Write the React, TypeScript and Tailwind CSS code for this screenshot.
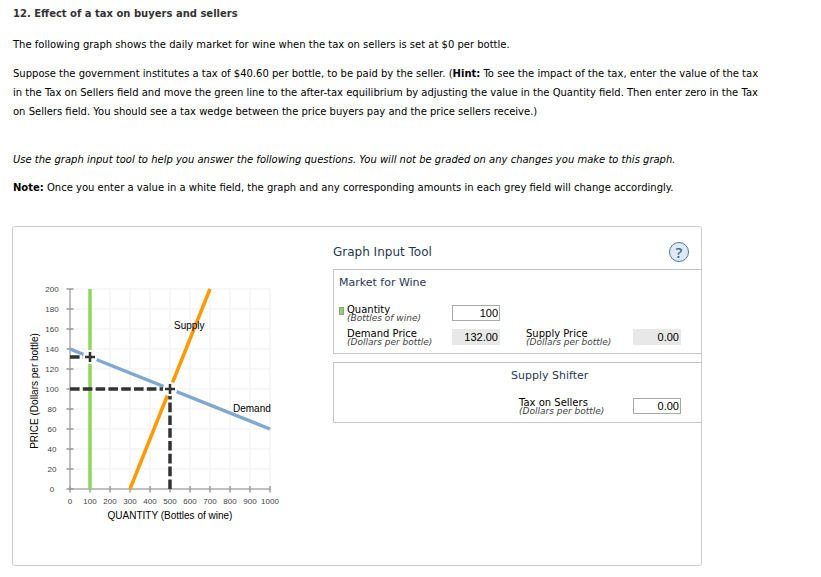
import React, { useState } from 'react';

interface FieldProps {
  id: string;
  label: string;
  unit: string;
  value: string;
  swatch?: boolean;
  onChange?: (text: string) => void;
}

interface PointProps {
  x: number;
  y: number;
}

const ORIGIN_X = 57;
const ORIGIN_Y = 262;

const px = (quantity: number) => ORIGIN_X + quantity / 5;
const py = (price: number) => ORIGIN_Y - price;

const steps = [0, 1, 2, 3, 4, 5, 6, 7, 8, 9, 10];

// white halo with a dark plus on top
const Point: React.FC<PointProps> = ({ x, y }) => (
  <g>
    <circle cx={x} cy={y} r="7.2" fill="#fff" />
    <path d={`M${x - 5} ${y}H${x + 5}M${x} ${y - 5}V${y + 5}`} stroke="#333" strokeWidth="2.6" />
  </g>
);

const Chart: React.FC<{ quantity: number; price: number; tax: number }> = ({ quantity, price, tax }) => {
  return (
    <svg width="320" height="338" className="shrink-0 font-['Liberation_Sans',sans-serif]" role="img" aria-label="Market for wine">
      <g stroke="#f7f7f7" strokeWidth="2">
        {steps.map((s) => (
          <path key={s} d={`M${px(s * 100)} 62V262M57 ${py(s * 20)}H257`} />
        ))}
      </g>
      <path d="M57 62V262H257" fill="none" stroke="#c0c0c0" strokeWidth="2" />
      <g stroke="#999" strokeWidth="1.4">
        {steps.map((s) => (
          <path key={s} d={`M${px(s * 100)} 259V265.5M53.5 ${py(s * 20)}H60.5`} />
        ))}
      </g>
      <g fontSize="8" fill="#444" textAnchor="middle">
        {steps.map((s) => (
          <text key={s} x={px(s * 100)} y="277">{s * 100}</text>
        ))}
      </g>
      <g fontSize="8" fill="#444" textAnchor="middle">
        {steps.map((s) => (
          <text key={s} x="39" y={py(s * 20) + 3}>{s * 20}</text>
        ))}
      </g>
      <path d={`M${px(quantity)} 62V262`} stroke="#8cd85c" strokeWidth="3.5" />
      <path d={`M57 ${py(140)}L257 ${py(60)}`} stroke="#7fa9d1" strokeWidth="3.5" />
      <path d={`M117 ${py(tax)}L197 ${py(200 + tax)}`} stroke="#ff9900" strokeWidth="3.5" />
      <g stroke="#333" strokeWidth="3.5" strokeDasharray="9.6 3.2">
        <path d={`M57 ${py(100)}H157`} />
        <path d={`M157 262V${py(100)}`} />
        <path d={`M57 ${py(price)}H${px(quantity)}`} />
      </g>
      <Point x={px(quantity)} y={py(price)} />
      <Point x={157} y={py(100)} />
      <g fontSize="10" fill="#000">
        <text x="161" y="102">Supply</text>
        <text x="220" y="185">Demand</text>
        <text x="157" y="292" textAnchor="middle">QUANTITY (Bottles of wine)</text>
        <text transform="translate(25 164) rotate(-90)" textAnchor="middle">PRICE (Dollars per bottle)</text>
      </g>
    </svg>
  );
};

const Field: React.FC<FieldProps> = ({ id, label, unit, value, swatch, onChange }) => {
  return (
    <div className="flex h-4 items-center">
      <span className="w-2 shrink-0">
        {swatch && <span className="mb-1 block h-2 w-[5px] border border-[#999] bg-[#8cd85c]" />}
      </span>
      <label htmlFor={id} className="flex-1 pt-0.5 text-[10px] leading-[9px] whitespace-nowrap text-black">
        {label}
        <span className="block text-[9px] text-[#444] italic">{unit}</span>
      </label>
      <input
        id={id}
        type="text"
        value={value}
        readOnly={!onChange}
        onChange={(e) => onChange && onChange(e.target.value)}
        className={`h-4 w-12 px-px text-right font-['Liberation_Sans',sans-serif] text-[11px] leading-[14px] text-black ${onChange ? 'border border-[#aaa] bg-white' : 'border border-[#e8e8e8] bg-[#e8e8e8]'}`}
      />
    </div>
  );
};

function App() {
  const [quantity, setQuantity] = useState('100');
  const [tax, setTax] = useState('0.00');

  const q = Math.min(1000, Math.max(0, Number(quantity) || 0));
  const t = Number(tax) || 0;
  const demandPrice = 140 - q * 0.08;
  const supplyPrice = Math.max(0, q * 0.5 - 150 + t);

  return (
    <main className="min-h-screen bg-white px-3 pt-1 font-['DejaVu_Sans',sans-serif] text-[10px] leading-[19px] text-black">
      <div className="max-w-[750px] pl-px">
        <h1 className="font-bold text-[#333]">12. Effect of a tax on buyers and sellers</h1>
        <p className="mt-3">The following graph shows the daily market for wine when the tax on sellers is set at $0 per bottle.</p>
        <p className="mt-[10px]">
          Suppose the government institutes a tax of $40.60 per bottle, to be paid by the seller. (<b>Hint:</b> To see
          the impact of the tax, enter the value of the tax in the Tax on Sellers field and move the green line to the
          after-tax equilibrium by adjusting the value in the Quantity field. Then enter zero in the Tax on Sellers
          field. You should see a tax wedge between the price buyers pay and the price sellers receive.)
        </p>
        <p className="mt-[29px] italic">
          Use the graph input tool to help you answer the following questions. You will not be graded on any changes you
          make to this graph.
        </p>
        <p className="mt-[9px]">
          <b>Note:</b> Once you enter a value in a white field, the graph and any corresponding amounts in each grey
          field will change accordingly.
        </p>
      </div>

      <section className="mt-[29px] flex max-w-[690px] rounded-[3px] border border-[#ccc]">
        <Chart quantity={q} price={demandPrice} tax={t} />
        <div className="min-w-0 flex-1">
          <div className="flex items-center justify-between pt-[15px] pr-3 pb-[7px]">
            <h2 className="text-[12px] text-[#1f3a54]">Graph Input Tool</h2>
            <button
              type="button"
              aria-label="Help"
              className="flex size-5 items-center justify-center rounded-full border border-[#4a78a8] bg-[#dfe9f2] font-['Open_Sans',sans-serif] text-[15px] leading-none font-semibold text-[#3c6a9c]"
            >
              ?
            </button>
          </div>

          <div className="h-[85px] border-y border-l border-[#c4c4c4] pr-5 pl-[5px]">
            <h3 className="pt-[3px] text-[11px] text-[#1f3a54]">Market for Wine</h3>
            <div className="mt-[13px] grid grid-cols-[161px_1fr] gap-x-[18px] gap-y-2">
              <Field id="quantity" label="Quantity" unit="(Bottles of wine)" value={quantity} swatch onChange={setQuantity} />
              <span />
              <Field id="demand-price" label="Demand Price" unit="(Dollars per bottle)" value={demandPrice.toFixed(2)} />
              <Field id="supply-price" label="Supply Price" unit="(Dollars per bottle)" value={supplyPrice.toFixed(2)} />
            </div>
          </div>

          <div className="mt-2 flex h-[61px] justify-end border-y border-l border-[#c4c4c4] pr-5">
            <div className="w-[170px]">
              <h3 className="pt-[3px] text-[11px] text-[#1f3a54]">Supply Shifter</h3>
              <div className="mt-[13px]">
                <Field id="tax" label="Tax on Sellers" unit="(Dollars per bottle)" value={tax} onChange={setTax} />
              </div>
            </div>
          </div>
        </div>
      </section>
    </main>
  );
}

export default App;
